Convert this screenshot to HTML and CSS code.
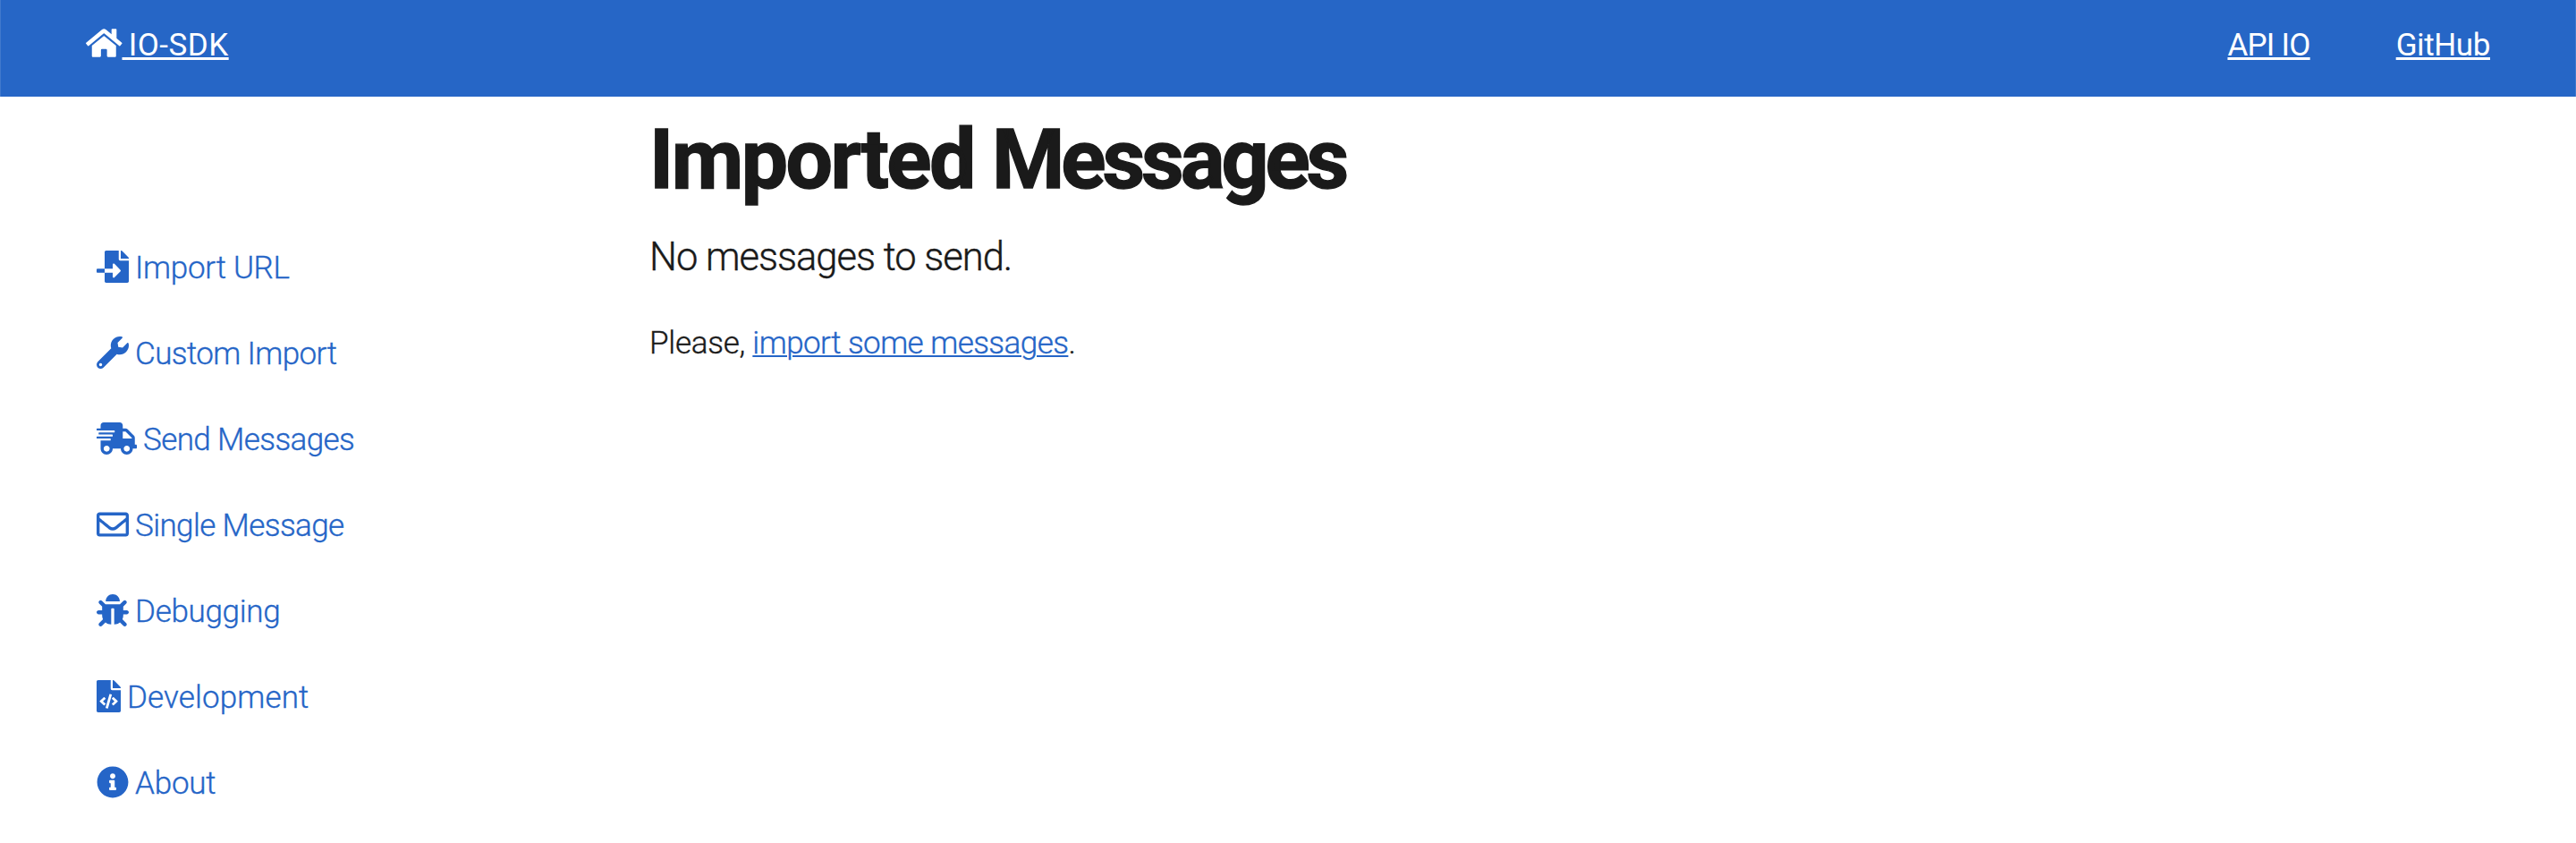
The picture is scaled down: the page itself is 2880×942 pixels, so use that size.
FILE: index.html
```
<!DOCTYPE html>
<html lang="en">
<head>
<meta charset="utf-8">
<title>IO-SDK</title>
<link rel="stylesheet" href="styles.css">
</head>
<body>
<header class="topbar">
  <a class="brand" href="#"><svg class="icon icon-home" viewBox="0 0 576 512"><path d="M280.37 148.26L96 300.11V464a16 16 0 0 0 16 16l112.06-.29a16 16 0 0 0 15.92-16V368a16 16 0 0 1 16-16h64a16 16 0 0 1 16 16v95.64a16 16 0 0 0 16 16.05L464 480a16 16 0 0 0 16-16V300L295.67 148.26a12.19 12.19 0 0 0-15.3 0zM571.6 251.47L488 182.56V44.05a12 12 0 0 0-12-12h-56a12 12 0 0 0-12 12v72.61L318.47 43a48 48 0 0 0-61 0L4.34 251.47a12 12 0 0 0-1.6 16.9l25.5 31A12 12 0 0 0 45.15 301l235.22-193.74a12.19 12.19 0 0 1 15.3 0L530.9 301a12 12 0 0 0 16.9-1.6l25.5-31a12 12 0 0 0-1.7-16.93z"/></svg><span class="brand-name">&nbsp;IO-SDK</span></a>
  <nav class="toplinks">
    <a class="link-api" href="#">API IO</a>
    <a class="link-github" href="#">GitHub</a>
  </nav>
</header>
<div class="layout">
  <nav class="sidebar">
    <a class="item import-url" href="#"><svg class="icon" viewBox="0 0 512 512"><path d="M16 288c-8.8 0-16 7.2-16 16v32c0 8.8 7.2 16 16 16h112v-64H16zm489-183L407.1 7c-4.5-4.5-10.6-7-17-7H384v128h128v-6.1c0-6.3-2.5-12.4-7-16.9zm-153 31V0H152c-13.3 0-24 10.7-24 24v264h128v-65.2c0-14.3 17.3-21.4 27.4-11.3L379 308c6.6 6.7 6.6 17.4 0 24l-95.7 96.4c-10.1 10.1-27.4 3-27.4-11.3V352H128v136c0 13.3 10.7 24 24 24h336c13.3 0 24-10.7 24-24V160H376c-13.2 0-24-10.8-24-24z"/></svg><span>Import URL</span></a>
    <a class="item" href="#"><svg class="icon" viewBox="0 0 512 512"><path d="M507.73 109.1c-2.24-9.03-13.54-12.09-20.12-5.51l-74.36 74.36-67.88-11.31-11.31-67.88 74.36-74.36c6.62-6.62 3.43-17.9-5.66-20.16-47.38-11.74-99.55.91-136.58 37.93-39.64 39.64-50.55 97.1-34.05 147.2L18.74 402.76c-24.99 24.99-24.99 65.51 0 90.5 24.99 24.99 65.51 24.99 90.5 0l213.21-213.21c50.12 16.71 107.47 5.68 147.37-34.22 37.07-37.07 49.7-89.32 37.91-136.73zM64 472c-13.25 0-24-10.75-24-24 0-13.26 10.75-24 24-24s24 10.74 24 24c0 13.25-10.75 24-24 24z"/></svg><span>Custom Import</span></a>
    <a class="item" href="#"><svg class="icon icon-wide" viewBox="0 0 640 512"><path d="M624 352h-16V243.9c0-12.7-5.1-24.9-14.1-33.9L494 110.1c-9-9-21.2-14.1-33.9-14.1H416V48c0-26.5-21.5-48-48-48H112C85.5 0 64 21.5 64 48v48H8c-4.4 0-8 3.6-8 8v16c0 4.4 3.6 8 8 8h272c4.4 0 8 3.6 8 8v16c0 4.4-3.6 8-8 8H40c-4.4 0-8 3.6-8 8v16c0 4.4 3.6 8 8 8h208c4.4 0 8 3.6 8 8v16c0 4.4-3.6 8-8 8H8c-4.4 0-8 3.6-8 8v16c0 4.4 3.6 8 8 8h208c4.4 0 8 3.6 8 8v16c0 4.4-3.6 8-8 8H64v128c0 53 43 96 96 96s96-43 96-96h128c0 53 43 96 96 96s96-43 96-96h48c8.8 0 16-7.2 16-16v-32c0-8.8-7.2-16-16-16zM160 464c-26.5 0-48-21.5-48-48s21.5-48 48-48 48 21.5 48 48-21.5 48-48 48zm320 0c-26.5 0-48-21.5-48-48s21.5-48 48-48 48 21.5 48 48-21.5 48-48 48zm80-208H416V144h44.1l99.9 99.9V256z"/></svg><span>Send Messages</span></a>
    <a class="item" href="#"><svg class="icon" viewBox="0 0 512 512"><path d="M464 64H48C21.49 64 0 85.49 0 112v288c0 26.51 21.49 48 48 48h416c26.51 0 48-21.49 48-48V112c0-26.51-21.49-48-48-48zm0 48v40.805c-22.422 18.259-58.168 46.651-134.587 106.49-16.841 13.247-50.201 45.072-73.413 44.701-23.208.375-56.579-31.459-73.413-44.701C106.18 199.465 70.425 171.067 48 152.805V112h416zM48 400V214.398c22.914 18.251 55.409 43.862 104.938 82.646 21.857 17.205 60.134 55.186 103.062 54.955 42.717.231 80.509-37.199 103.053-54.947 49.528-38.783 82.032-64.401 104.947-82.653V400H48z"/></svg><span>Single Message</span></a>
    <a class="item debugging" href="#"><svg class="icon" viewBox="0 0 512 512"><path d="M511.988 288.9c-.478 17.43-15.217 31.1-32.653 31.1H424v16c0 21.864-4.882 42.584-13.6 61.145l60.228 60.228c12.496 12.497 12.496 32.758 0 45.255-12.498 12.497-32.759 12.496-45.256 0l-54.736-54.736C345.886 467.965 314.351 480 280 480V236c0-6.627-5.373-12-12-12h-24c-6.627 0-12 5.373-12 12v244c-34.351 0-65.886-12.035-90.636-32.108l-54.736 54.736c-12.498 12.497-32.759 12.496-45.256 0-12.496-12.497-12.496-32.758 0-45.255l60.228-60.228C92.882 378.584 88 357.864 88 336v-16H32.666C15.23 320 .491 306.33.013 288.9-.484 270.816 13.992 256 32 256h56v-58.745l-46.628-46.628c-12.496-12.497-12.496-32.758 0-45.255 12.498-12.497 32.758-12.497 45.256 0L141.255 160h229.489l54.627-54.627c12.498-12.497 32.758-12.497 45.256 0 12.496 12.497 12.496 32.758 0 45.255L424 197.255V256h56c18.008 0 32.484 14.816 31.988 32.9zM257 0c-61.856 0-112 50.144-112 112h224C369 50.144 318.856 0 257 0z"/></svg><span>Debugging</span></a>
    <a class="item development" href="#"><svg class="icon icon-narrow" viewBox="0 0 384 512"><path d="M384 121.941V128H256V0h6.059c6.365 0 12.47 2.529 16.971 7.029l97.941 97.941A24.005 24.005 0 0 1 384 121.941zM248 160c-13.2 0-24-10.8-24-24V0H24C10.745 0 0 10.745 0 24v464c0 13.255 10.745 24 24 24h336c13.255 0 24-10.745 24-24V160H248zM123.206 400.505a5.4 5.4 0 0 1-7.633.246l-64.866-60.812a5.4 5.4 0 0 1 0-7.879l64.866-60.812a5.4 5.4 0 0 1 7.633.246l19.579 20.885a5.4 5.4 0 0 1-.372 7.747L101.65 336l40.763 35.874a5.4 5.4 0 0 1 .372 7.747l-19.579 20.884zm51.295 50.479l-27.97-8.121a5.4 5.4 0 0 1-3.687-6.692l61.44-211.626a5.4 5.4 0 0 1 6.692-3.687l27.97 8.121a5.4 5.4 0 0 1 3.687 6.692l-61.44 211.626a5.4 5.4 0 0 1-6.692 3.687zm160.792-111.045l-64.866 60.812a5.4 5.4 0 0 1-7.633-.246l-19.58-20.885a5.4 5.4 0 0 1 .372-7.747L284.35 336l-40.763-35.874a5.4 5.4 0 0 1-.372-7.747l19.58-20.885a5.4 5.4 0 0 1 7.633-.246l64.866 60.812a5.4 5.4 0 0 1-.001 7.879z"/></svg><span>Development</span></a>
    <a class="item about" href="#"><svg class="icon" viewBox="0 0 512 512"><path d="M256 8C119.043 8 8 119.083 8 256c0 136.997 111.043 248 248 248s248-111.003 248-248C504 119.083 392.957 8 256 8zm0 110c23.196 0 42 18.804 42 42s-18.804 42-42 42-42-18.804-42-42 18.804-42 42-42zm56 254c0 6.627-5.373 12-12 12h-88c-6.627 0-12-5.373-12-12v-24c0-6.627 5.373-12 12-12h12v-64h-12c-6.627 0-12-5.373-12-12v-24c0-6.627 5.373-12 12-12h64c6.627 0 12 5.373 12 12v100h12c6.627 0 12 5.373 12 12v24z"/></svg><span>About</span></a>
  </nav>
  <main class="content">
    <h1><span class="loose">Imported</span> Messages</h1>
    <p class="lead">No messages to send.</p>
    <p class="hint">Please, <a href="#">import some messages</a>.</p>
  </main>
</div>
</body>
</html>
```
FILE: styles.css
```
* {
  box-sizing: border-box;
}

body {
  margin: 0;
  background: #fff;
  color: #1a1a1a;
  font: 300 35px/1.5 Roboto, "Open Sans", sans-serif;
}

a {
  color: #2565c7;
}

.topbar {
  display: flex;
  justify-content: space-between;
  align-items: flex-start;
  height: 108px;
  padding: 0 96px;
  background: #2666c6;
  box-shadow: inset 1px 0 #4079cd, inset -1px 0 #4079cd;
  font-weight: 400;
  line-height: 101px;
}

.topbar a {
  color: #fff;
  text-decoration-thickness: 2.5px;
  text-underline-offset: 2px;
}

.topbar .brand {
  display: flex;
  align-items: center;
  text-decoration: none;
}

.brand-name {
  text-decoration: underline;
  text-decoration-thickness: 2.5px;
  text-underline-offset: 2px;
  letter-spacing: 0.5px;
  word-spacing: -2px;
}

.toplinks {
  display: flex;
  gap: 96px;
}

.link-api {
  letter-spacing: -0.75px;
}

.link-github {
  letter-spacing: -0.4px;
}

.icon {
  display: block;
  flex: none;
  width: 36px;
  height: 36px;
  fill: currentColor;
}

.icon-home {
  width: 40.5px;
  margin-bottom: 5px;
}

.icon-wide {
  width: 45px;
}

.icon-narrow {
  width: 27px;
}

.layout {
  display: grid;
  grid-template-columns: 726px 1fr;
}

.sidebar {
  padding: 142px 0 0 108px;
}

.item {
  display: flex;
  align-items: center;
  gap: 7px;
  height: 96px;
  text-decoration: none;
  letter-spacing: -0.6px;
}

.item span {
  margin-top: 5px;
  -webkit-text-stroke: 0.35px currentColor;
}

.import-url {
  letter-spacing: -0.28px;
}

.debugging {
  letter-spacing: -0.3px;
}

.development {
  letter-spacing: 0.12px;
}

.about {
  letter-spacing: -0.2px;
}

h1,
p {
  margin: 0;
}

h1 {
  padding-top: 1px;
  font-size: 93px;
  font-weight: 700;
  line-height: 140px;
  letter-spacing: -4.1px;
  word-spacing: 1px;
  -webkit-text-stroke: 1.4px currentColor;
}

.loose {
  letter-spacing: -2.5px;
}

.lead {
  font-size: 43.5px;
  line-height: 78px;
  letter-spacing: -1px;
  -webkit-text-stroke: 0.4px currentColor;
}

.hint {
  margin-top: 27px;
  line-height: 60px;
  letter-spacing: -0.25px;
  -webkit-text-stroke: 0.35px currentColor;
}

.hint a {
  letter-spacing: -0.55px;
  text-decoration-thickness: 2px;
  text-underline-offset: 2px;
}
```
